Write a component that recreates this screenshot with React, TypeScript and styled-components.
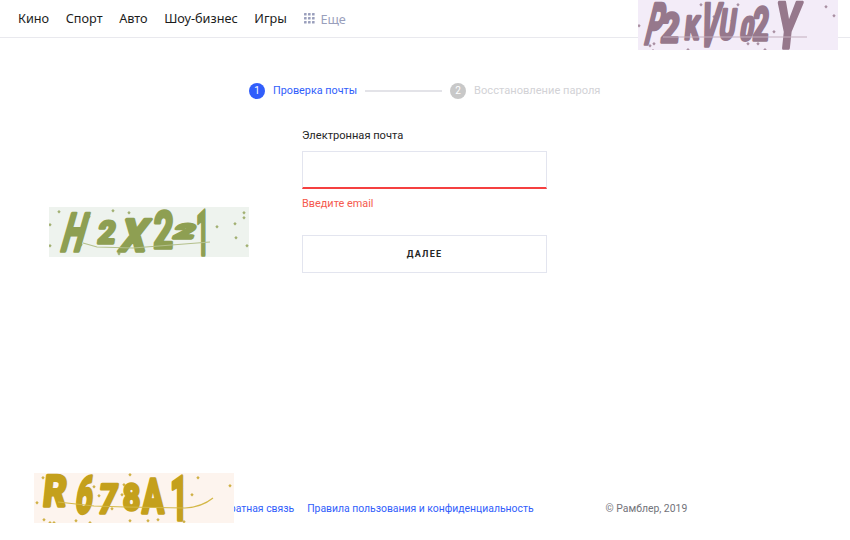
import React from "react";
import styled, { createGlobalStyle } from "styled-components";

const Global = createGlobalStyle`
  html, body { margin: 0; padding: 0; background: #fff; }
  body { font-family: Roboto, "Liberation Sans", sans-serif; }
`;

const Page = styled.div`
  position: relative;
  width: 850px;
  height: 540px;
  display: flex;
  flex-direction: column;
  overflow: hidden;
`;

const Header = styled.header`
  height: 37px;
  border-bottom: 1px solid #e9e9ee;
  display: flex;
  align-items: center;
  padding: 0 0 0 18px;
  gap: 16.6px;
  flex: none;
  box-sizing: content-box;
`;

const NavLink = styled.a`
  font-family: "Noto Sans", sans-serif;
  font-size: 12.7px;
  font-weight: 400;
  color: #1c1c1c;
  line-height: 37px;
`;

const More = styled.a`
  display: flex;
  align-items: center;
  gap: 5px;
  margin-left: 1px;
  font-family: "Noto Sans", sans-serif;
  font-size: 12.7px;
  font-weight: 400;
  color: #9a9fbc;
`;

const Stepper = styled.div`
  display: flex;
  align-items: center;
  margin: 44px 0 0 249px;
  height: 17px;
`;

const StepDot = styled.span<{ $active?: boolean }>`
  width: 16px;
  height: 16px;
  border-radius: 50%;
  background: ${(p) => (p.$active ? "#315efb" : "#c8c8c8")};
  color: #fff;
  font-size: 10px;
  line-height: 16px;
  text-align: center;
  flex: none;
`;

const StepLabel = styled.span<{ $active?: boolean }>`
  margin-left: 8px;
  font-size: ${(p) => (p.$active ? "10.8px" : "11.1px")};
  color: ${(p) => (p.$active ? "#315efb" : "#d2d2d6")};
  white-space: nowrap;
`;

const StepLine = styled.span`
  width: 77px;
  height: 2px;
  background: #e3e3e8;
  margin: 0 8px;
  flex: none;
`;

const Form = styled.form`
  width: 245px;
  margin: 29px 0 0 302px;
  display: flex;
  flex-direction: column;
`;

const Label = styled.label`
  font-size: 11.1px;
  line-height: 16px;
  color: #262626;
  margin-bottom: 7px;
`;

const Input = styled.input`
  width: 245px;
  height: 38px;
  box-sizing: border-box;
  background: #fff;
  border: 1px solid #e3e5ef;
  border-bottom: 2px solid #f54040;
  outline: none;
  padding: 0 12px;
`;

const ErrorText = styled.div`
  font-size: 10.9px;
  line-height: 16px;
  margin-top: 7px;
  color: #f55a4e;
`;

const NextButton = styled.button`
  width: 245px;
  height: 38px;
  margin-top: 23px;
  box-sizing: border-box;
  background: #fff;
  border: 1px solid #e3e5ef;
  font-family: Roboto, sans-serif;
  font-size: 9px;
  font-weight: 700;
  letter-spacing: 1.25px;
  color: #262626;
  padding: 0;
`;

const Footer = styled.footer`
  margin-top: auto;
  margin-bottom: 23px;
  padding-left: 217px;
  display: flex;
  align-items: center;
  font-size: 10.4px;
  line-height: 16px;
`;

const FooterLink = styled.a`
  color: #315efb;
  margin-right: 13px;
  white-space: nowrap;
`;

const Copyright = styled.span`
  margin-left: 59px;
  color: #73737a;
  white-space: nowrap;
`;

const CaptchaBox = styled.svg<{ $x: number; $y: number }>`
  position: absolute;
  left: ${(p) => p.$x}px;
  top: ${(p) => p.$y}px;
  width: 200px;
  height: 50px;
  display: block;
`;

const CaptchaGlyph = styled.text<{ $ink: string }>`
  font-family: Roboto, sans-serif;
  font-weight: 700;
  fill: ${(p) => p.$ink};
  stroke: ${(p) => p.$ink};
  stroke-width: 3.4px;
  stroke-linejoin: round;
`;

type Letter = { c: string; x: number; base: number; h: number; w: number; skew: number };

type CaptchaProps = {
  x: number;
  y: number;
  bg: string;
  ink: string;
  line: string;
  linePath: string;
  letters: Letter[];
  dots: [number, number][];
};

const Captcha = ({ x, y, bg, ink, line, linePath, letters, dots }: CaptchaProps) => (
  <CaptchaBox $x={x} $y={y} viewBox="0 0 200 50" aria-hidden>
    <rect width="200" height="50" fill={bg} />
    {letters.map((l, i) => (
      <CaptchaGlyph
        key={i}
        $ink={ink}
        fontSize={(l.h - 3.4) / 0.711}
        textLength={l.w}
        lengthAdjust="spacingAndGlyphs"
        transform={`translate(${l.x} ${l.base - 1.7}) skewX(${l.skew})`}
      >
        {l.c}
      </CaptchaGlyph>
    ))}
    <path d={linePath} fill="none" stroke={line} strokeWidth="1.2" />
    {dots.map(([dx, dy], i) => (
      <rect key={i} x={dx} y={dy} width="2.4" height="2.4" fill={ink} opacity="0.8" transform={`rotate(45 ${dx} ${dy})`} />
    ))}
  </CaptchaBox>
);

const L = (c: string, x: number, base: number, h: number, w: number, skew: number): Letter => ({ c, x, base, h, w, skew });

const GridIcon = () => (
  <svg width="11" height="11" viewBox="0 0 11 11" fill="#9a9fbc">
    {[0, 4, 8].flatMap((cy) =>
      [0, 4, 8].map((cx) => <rect key={`${cx}-${cy}`} x={cx} y={cy} width="2.6" height="2.6" rx="0.5" />)
    )}
  </svg>
);

export default function App() {
  return (
    <Page>
      <Global />
      <Header>
        <NavLink>Кино</NavLink>
        <NavLink>Спорт</NavLink>
        <NavLink>Авто</NavLink>
        <NavLink>Шоу-бизнес</NavLink>
        <NavLink>Игры</NavLink>
        <More>
          <GridIcon />
          Еще
        </More>
      </Header>

      <Stepper>
        <StepDot $active>1</StepDot>
        <StepLabel $active>Проверка почты</StepLabel>
        <StepLine />
        <StepDot>2</StepDot>
        <StepLabel>Восстановление пароля</StepLabel>
      </Stepper>

      <Form onSubmit={(e) => e.preventDefault()}>
        <Label>Электронная почта</Label>
        <Input type="text" />
        <ErrorText>Введите email</ErrorText>
        <NextButton type="button">ДАЛЕЕ</NextButton>
      </Form>

      <Footer>
        <FooterLink>Обратная связь</FooterLink>
        <FooterLink>Правила пользования и конфиденциальность</FooterLink>
        <Copyright>© Рамблер, 2019</Copyright>
      </Footer>

      <Captcha
        x={638}
        y={0}
        bg="#f3ecf8"
        ink="#96788c"
        line="#c4aebd"
        linePath="M25 37 H169"
        letters={[
          L("P", 5, 46, 44, 16, -14),
          L("2", 22, 44, 32, 18, -6),
          L("K", 46, 41, 26, 14, -6),
          L("V", 60, 48, 46, 18, -10),
          L("U", 80, 41, 33, 16, -8),
          L("0", 101, 42, 26, 13, -10),
          L("2", 114, 42, 36, 16, -4),
          L("Y", 136, 50, 49, 24, -6),
        ]}
        dots={[[1, 24], [12, 44], [16, 42], [15, 49], [50, 48], [63, 3], [76, 15], [100, 3], [94, 19], [110, 42], [120, 42], [136, 30], [127, 48], [188, 5], [196, 14]]}
      />
      <Captcha
        x={49}
        y={207}
        bg="#eef3ee"
        ink="#8e9f52"
        line="#b4c08c"
        linePath="M34 36 L48 40 L84 41 L161 35"
        letters={[
          L("H", 10, 46, 41, 22, -16),
          L("2", 48, 38, 25, 17, -8),
          L("X", 69, 46, 35, 26, -14),
          L("2", 104, 43, 40, 20, -2),
          L("2", 124, 33, 17, 19, -20),
          L("1", 147, 50, 48, 13, 0),
        ]}
        dots={[[10, 3], [1, 16], [1, 37], [32, 36], [40, 8], [64, 2], [70, 45], [80, 4], [88, 42], [168, 18], [186, 15], [195, 4], [195, 9], [187, 29], [198, 37]]}
      />
      <Captcha
        x={34}
        y={473}
        bg="#fdf4ee"
        ink="#c4a01c"
        line="#d4b848"
        linePath="M24 29 L60 33 L91 34 L151 35 Q168 34 179 25"
        letters={[
          L("R", 8, 35, 34, 23, -6),
          L("6", 40, 42, 40, 17, -8),
          L("7", 63, 42, 32, 18, -8),
          L("8", 89, 39, 29, 17, 0),
          L("A", 108, 42, 37, 22, 0),
          L("1", 136, 49, 47, 18, 0),
        ]}
        dots={[[9, 3], [3, 28], [10, 45], [16, 48], [20, 48], [42, 46], [56, 48], [60, 12], [65, 21], [72, 12], [78, 34], [88, 20], [90, 10], [96, 46], [96, 0], [114, 46], [124, 45], [150, 47], [158, 20], [164, 3], [196, 11]]}
      />
    </Page>
  );
}
